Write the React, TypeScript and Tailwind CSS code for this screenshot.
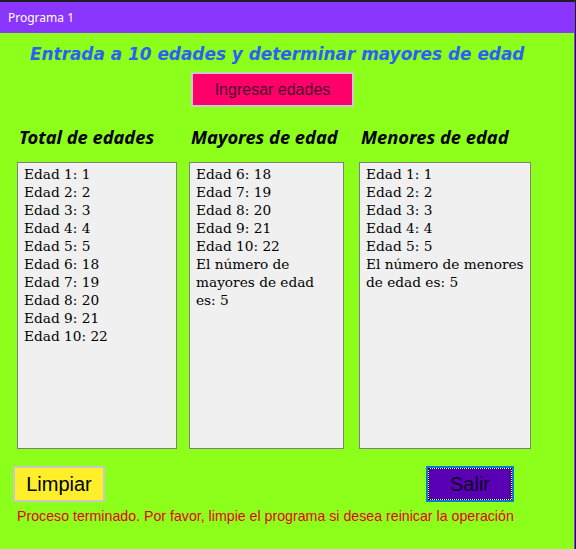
const total = [
  "Edad 1: 1",
  "Edad 2: 2",
  "Edad 3: 3",
  "Edad 4: 4",
  "Edad 5: 5",
  "Edad 6: 18",
  "Edad 7: 19",
  "Edad 8: 20",
  "Edad 9: 21",
  "Edad 10: 22",
];

const mayores = ["Edad 6: 18", "Edad 7: 19", "Edad 8: 20", "Edad 9: 21", "Edad 10: 22", "El número de", "mayores de edad", "es: 5"];

const menores = ["Edad 1: 1", "Edad 2: 2", "Edad 3: 3", "Edad 4: 4", "Edad 5: 5", "El número de menores", "de edad es: 5"];

interface ColumnProps {
  title: string;
  lines: string[];
  width: string;
}

function Column({ title, lines, width }: ColumnProps) {
  return (
    <div className="flex flex-col">
      <h2 className="pl-[2px] text-[18.3px] leading-[24px] font-bold italic text-black [font-family:'Noto_Sans',sans-serif] whitespace-nowrap">
        {title}
      </h2>
      <div
        className={`${width} mt-[13px] h-[287px] border border-[#7f7f7f] bg-[#f0f0f0] pl-[6px] pt-[2px] text-[13.7px] leading-[18px] text-black [font-family:'DejaVu_Serif',serif]`}
      >
        {lines.map((line, i) => (
          <div key={i} className="whitespace-nowrap">
            {line}
          </div>
        ))}
      </div>
    </div>
  );
}

export default function App() {
  return (
    <div className="w-[576px] h-[549px] overflow-hidden border-t-2 border-r border-[#1e1e1e] bg-[#8b36ff]">
      <div className="h-[31px] flex items-center pl-2 text-[12px] text-white [font-family:'Noto_Sans',sans-serif]">
        Programa 1
      </div>
      <div className="h-[516px] mr-px bg-[#8cff1a] flex flex-col [font-family:'Liberation_Sans',Arial,sans-serif]">
        <h1 className="mt-[10px] pl-[30px] text-[16.9px] leading-[22px] font-bold italic text-[#2a60f4] whitespace-nowrap [font-family:'DejaVu_Sans',sans-serif]">
          Entrada a 10 edades y determinar mayores de edad
        </h1>
        <button
          type="button"
          className="mt-[7px] ml-[191px] w-[163px] h-[35px] border-2 border-[#cacaca] bg-[#ff006a] text-[16px] text-[#4a0c2c]"
        >
          Ingresar edades
        </button>
        <div className="mt-[18px] ml-[17px] flex">
          <Column title="Total de edades" lines={total} width="w-[160px]" />
          <div className="ml-[12px]">
            <Column title="Mayores de edad" lines={mayores} width="w-[155px]" />
          </div>
          <div className="ml-[15px]">
            <Column title="Menores de edad" lines={menores} width="w-[172px]" />
          </div>
        </div>
        <div className="mt-[17px] flex items-start">
          <button
            type="button"
            className="ml-[13px] w-[92px] h-[36px] border-2 border-[#c8c8c8] bg-[#ffef2a] text-[20px] text-black"
          >
            Limpiar
          </button>
          <button
            type="button"
            className="ml-[321px] w-[88px] h-[36px] border-2 border-[#0a78d6] bg-[#5a00b4] p-0"
          >
            <div className="relative h-full w-full border border-white flex items-center justify-center text-[20px] text-[#0c0020]">
              <span className="absolute -inset-px border border-dotted border-black" />
              Salir
            </div>
          </button>
        </div>
        <p className="mt-[5px] pl-[17px] text-[14.2px] leading-[18px] text-[#e8001c] whitespace-nowrap">
          Proceso terminado. Por favor, limpie el programa si desea reinicar la operación
        </p>
      </div>
    </div>
  );
}
